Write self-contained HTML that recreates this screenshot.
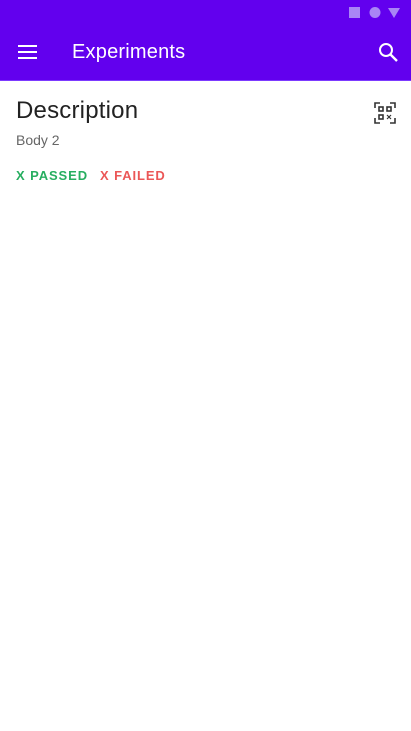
<!DOCTYPE html>
<html><head><style>
body{margin:0;width:411px;height:731px;background:#fff;font-family:"Liberation Sans",sans-serif;position:relative;overflow:hidden}
.bar{position:absolute;left:0;top:0;width:411px;height:80px;background:#6200ee}
.line{position:absolute;left:0;top:80px;width:411px;height:1px;background:#7c3aff}
.t{position:absolute;left:72px;top:40px;color:#fff;font-size:20px;line-height:24px;letter-spacing:0.2px}
.d{position:absolute;left:16px;top:97px;font-size:24px;color:#222;letter-spacing:0.2px}
.b{position:absolute;left:16px;top:132px;font-size:14px;color:#666}
.p{position:absolute;top:168px;font-size:13px;font-weight:bold;letter-spacing:0.9px}
</style></head><body>
<div class="bar"></div><div class="line"></div>
<svg style="position:absolute;left:348px;top:6px" width="56" height="14">
<rect x="1" y="1" width="11" height="11" fill="#a985f5"/>
<circle cx="27" cy="6.5" r="5.5" fill="#a985f5"/>
<polygon points="40,2 52,2 46,12" fill="#a985f5"/></svg>
<svg style="position:absolute;left:18px;top:44px" width="20" height="16"><rect x="0" y="1" width="19" height="2" fill="#fff"/><rect x="0" y="7" width="19" height="2" fill="#fff"/><rect x="0" y="13" width="19" height="2" fill="#fff"/></svg>
<div class="t">Experiments</div>
<svg style="position:absolute;left:378px;top:42px" width="22" height="22"><circle cx="8" cy="8" r="6" fill="none" stroke="#fff" stroke-width="2"/><line x1="12.5" y1="12.5" x2="19" y2="19" stroke="#fff" stroke-width="2.4"/></svg>
<div class="d">Description</div>
<svg style="position:absolute;left:374px;top:102px" width="22" height="22" fill="none" stroke="#333" stroke-width="1.6">
<path d="M1 6V1H6M16 1H21V6M21 16V21H16M6 21H1V16"/>
<rect x="5" y="5" width="4" height="4"/><rect x="13" y="5" width="4" height="4"/><rect x="5" y="13" width="4" height="4"/><path d="M13 13l4 4M17 13l-4 4" stroke-width="1.2"/></svg>
<div class="b">Body 2</div>
<div class="p" style="left:16px;color:#27ae60">X PASSED</div>
<div class="p" style="left:100px;color:#eb5757">X FAILED</div>
</body></html>
